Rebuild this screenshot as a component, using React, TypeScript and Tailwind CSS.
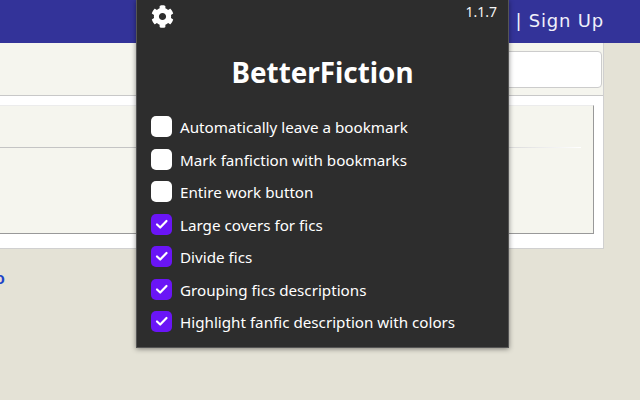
import { FaCog } from 'react-icons/fa';

const options = [
  { label: 'Automatically leave a bookmark', checked: false },
  { label: 'Mark fanfiction with bookmarks', checked: false },
  { label: 'Entire work button', checked: false },
  { label: 'Large covers for fics', checked: true },
  { label: 'Divide fics', checked: true },
  { label: 'Grouping fics descriptions', checked: true },
  { label: 'Highlight fanfic description with colors', checked: true },
];

const Popup = () => (
  <div className="absolute left-[136px] top-0 w-[373px] h-[348px] bg-[#2d2d2d] text-white border-l border-b border-r border-[#555] shadow-[0_1px_5px_rgba(0,0,0,0.45)] font-['Noto_Sans',sans-serif]">
    <div className="flex justify-between items-start h-[43px] pl-[14px] pr-[11px]">
      <FaCog className="mt-[5px] w-[23px] h-[23px]" />
      <span className="mt-[3px] text-[14px] leading-[18px] text-[#f4f4f4]">1.1.7</span>
    </div>
    <h1 className="text-center text-[27.8px] leading-[36px] font-bold mt-[11px]">BetterFiction</h1>
    <div className="flex flex-col mt-[26px] pl-[14px] gap-[11.5px]">
      {options.map((o) => (
        <div key={o.label} className="flex items-center h-[21px] gap-[8px]">
          <span
            className={
              o.checked
                ? 'flex items-center justify-center w-[21px] h-[21px] rounded-[5px] bg-[#6a15f6]'
                : 'flex items-center justify-center w-[21px] h-[21px] rounded-[5px] bg-white'
            }
          >
            {o.checked && (
              <svg viewBox="0 0 21 21" className="w-[21px] h-[21px]" fill="none">
                <path d="M6 10.5l3.2 3L15.5 7" stroke="#fff" strokeWidth="2.2" strokeLinecap="round" strokeLinejoin="round" />
              </svg>
            )}
          </span>
          <span className="pt-[2px] text-[15.2px] leading-[21px] whitespace-nowrap">{o.label}</span>
        </div>
      ))}
    </div>
  </div>
);

export default function App() {
  return (
    <div className="relative w-[640px] h-[400px] overflow-hidden bg-[#e4e2d6] font-['Liberation_Sans',sans-serif]">
      <div className="flex justify-end items-center h-[43px] pb-[2px] bg-[#333399] pr-[36px] text-[#f0f0fa] text-[18px] tracking-[0.8px] font-['DejaVu_Sans',sans-serif]">
        <span>| Sign Up</span>
      </div>
      <div className="w-[604px] bg-white border-r border-b border-[#d0d0d0] h-[206px]">
        <div className="flex justify-end items-center h-[53px] bg-[#f5f5ee] border-b border-[#c8c8c8] pr-[1px]">
          <div className="w-[200px] h-[37px] bg-white border border-[#cccccc] rounded-[4px]" />
        </div>
        <div className="mt-[9px] w-[594px] h-[129px] bg-[#f5f5ee] border-t border-r border-b border-t-[#ececec] border-r-[#999999] border-b-[#999999]">
          <div className="mt-[41px] w-[581px] h-px bg-[linear-gradient(to_right,#c4c4c4_80%,#ffffff)]" />
        </div>
      </div>
      <div className="mt-[21px] -ml-[5px] text-[16px] leading-[18px] font-bold text-[#1f44c8]">o</div>
      <Popup />
    </div>
  );
}
